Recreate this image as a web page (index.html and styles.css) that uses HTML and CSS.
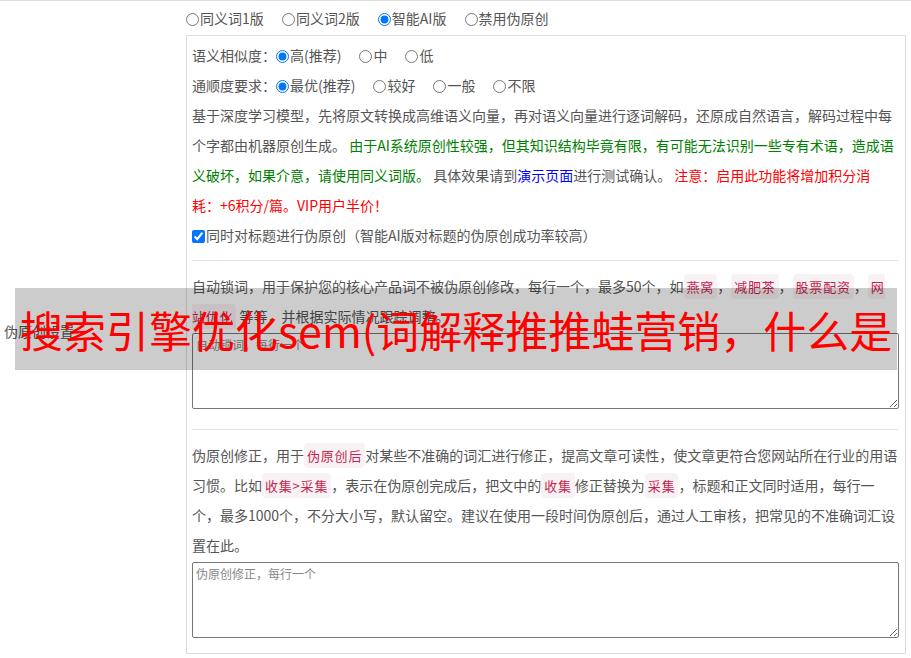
FILE: index.html
```html
<!DOCTYPE html>
<html lang="zh-CN">
<head>
<meta charset="utf-8">
<title>伪原创设置</title>
<link rel="stylesheet" href="styles.css">
</head>
<body>
<div class="table">
  <div class="row">
    <div class="label-cell">伪原创设置</div>
    <div class="value-cell">
      <div class="mode-row">
        <label class="opt"><input type="radio" name="mode">同义词1版</label>
        <label class="opt"><input type="radio" name="mode">同义词2版</label>
        <label class="opt"><input type="radio" name="mode" checked>智能AI版</label>
        <label class="opt"><input type="radio" name="mode">禁用伪原创</label>
      </div>
      <div class="box">
        <div class="line">语义相似度：<label class="opt2"><input type="radio" name="sim" checked>高(推荐)</label><label class="opt2"><input type="radio" name="sim">中</label><label class="opt2"><input type="radio" name="sim">低</label></div>
        <div class="line">通顺度要求：<label class="opt2"><input type="radio" name="flu" checked>最优(推荐)</label><label class="opt2"><input type="radio" name="flu">较好</label><label class="opt2"><input type="radio" name="flu">一般</label><label class="opt2"><input type="radio" name="flu">不限</label></div>
        <p class="para">基于深度学习模型，先将原文转换成高维语义向量，再对语义向量进行逐词解码，还原成自然语言，解码过程中每个字都由机器原创生成。 <span class="green">由于AI系统原创性较强，但其知识结构毕竟有限，有可能无法识别一些专有术语，造成语义破坏，如果介意，请使用同义词版。</span> 具体效果请到<a class="blue" href="#">演示页面</a>进行测试确认。 <span class="red">注意：启用此功能将增加积分消耗：+6积分/篇。VIP用户半价！</span></p>
        <div class="line"><label><input type="checkbox" class="chk" checked>同时对标题进行伪原创（智能AI版对标题的伪原创成功率较高）</label></div>
        <hr class="sep">
        <p class="para">自动锁词，用于保护您的核心产品词不被伪原创修改，每行一个，最多50个，如<code>燕窝</code>，<code>减肥茶</code>，<code>股票配资</code>，<code>网站优化</code> 等等，并根据实际情况跟踪调整。</p>
        <textarea class="area" placeholder="自动锁词，每行一个"></textarea>
        <hr class="sep sep-lg">
        <p class="para">伪原创修正，用于<code>伪原创后</code>对某些不准确的词汇进行修正，提高文章可读性，使文章更符合您网站所在行业的用语习惯。比如<code>收集&gt;采集</code>，表示在伪原创完成后，把文中的<code>收集</code>修正替换为<code>采集</code>，标题和正文同时适用，每行一个，最多1000个，不分大小写，默认留空。建议在使用一段时间伪原创后，通过人工审核，把常见的不准确词汇设置在此。</p>
        <textarea class="area" placeholder="伪原创修正，每行一个"></textarea>
      </div>
    </div>
  </div>
</div>
<div class="overlay">搜索引擎优化sem(词解释推推蛙营销，什么是</div>
</body>
</html>
```

FILE: styles.css
```css
html, body {
  margin: 0;
  padding: 0;
  background: #fff;
}
body {
  font-family: "Noto Sans CJK TC", "Noto Sans CJK SC", sans-serif;
  font-size: 14px;
  color: #555;
  width: 911px;
  overflow: hidden;
  text-spacing-trim: space-all;
}
.table {
  border-top: 1px solid #ddd;
}
.row {
  display: flex;
  align-items: center;
}
.label-cell {
  width: 182px;
  padding-left: 4px;
  line-height: 20px;
  flex: none;
}
.value-cell {
  width: 720px;
  padding-bottom: 7px;
  flex: none;
}
.mode-row {
  padding-top: 2px;
  height: 30px;
  line-height: 30px;
  margin-bottom: 2px;
}
.opt {
  margin-right: 15px;
}
.opt2 {
  margin-right: 18px;
}
input[type="radio"] {
  margin: 0 1px 0 0;
  width: 13px;
  height: 13px;
  vertical-align: -2px;
}
.chk {
  margin: 0 1px 0 0;
  width: 13px;
  height: 13px;
  vertical-align: -2px;
}
.box {
  border: 1px solid #ddd;
  padding: 4px 7px 15px 5px;
}
.line {
  line-height: 30px;
  height: 30px;
  white-space: nowrap;
}
.para {
  margin: 0;
  line-height: 30px;
}
.green {
  color: #008000;
}
.blue {
  color: #0000ff;
  text-decoration: none;
}
.red {
  color: #ff0000;
}
code {
  font-family: "Noto Sans CJK TC", "Noto Sans CJK SC", sans-serif;
  font-size: 13px;
  line-height: 1;
  letter-spacing: 0.8px;
  color: #c7254e;
  background: #f9f2f4;
  border-radius: 4px;
  padding: 3px 3px;
}
.sep {
  border: 0;
  border-top: 1px solid #e3e3e3;
  margin: 10px 0;
  height: 0;
}
.sep-lg {
  margin-top: 20px;
}
.area {
  display: block;
  box-sizing: border-box;
  width: 707px;
  height: 76px;
  margin-top: 2px;
  padding: 2px 3px;
  border: 1px solid #767676;
  border-radius: 2px;
  font-family: "Noto Sans CJK TC", "Noto Sans CJK SC", sans-serif;
  font-size: 12px;
  line-height: 18px;
  resize: both;
}
.area::placeholder {
  color: #888;
}
.overlay {
  position: absolute;
  left: 15px;
  top: 288px;
  width: 877px;
  height: 82px;
  padding-left: 5px;
  background: rgba(0, 0, 0, 0.2);
  color: #ff0000;
  font-family: "Noto Sans CJK SC", sans-serif;
  font-size: 43px;
  line-height: 82px;
  white-space: nowrap;
  overflow: hidden;
}
```
